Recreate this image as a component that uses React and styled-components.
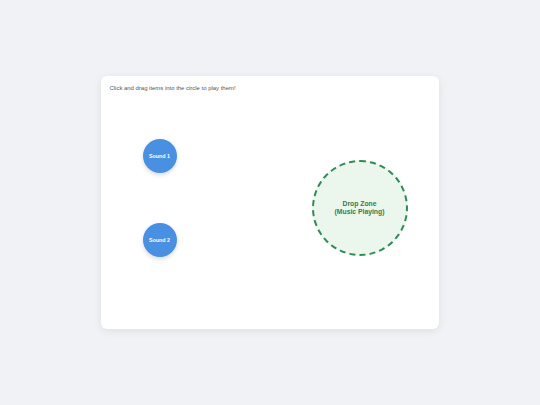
import React from 'react'
import styled, { createGlobalStyle } from 'styled-components'

const GlobalStyle = createGlobalStyle`
  html, body {
    margin: 0;
    padding: 0;
    background: #f0f2f5;
    font-family: "Liberation Sans", Arial, sans-serif;
  }
`;

const Page = styled.div`
  display: flex;
  align-items: center;
  justify-content: center;
  width: 540px;
  height: 405px;
`;

const Card = styled.div`
  position: relative;
  box-sizing: border-box;
  width: 338px;
  height: 253px;
  margin-left: -1px;
  padding: 8px 9px;
  background: #ffffff;
  border-radius: 6px;
  box-shadow: 0 2px 8px rgba(0, 0, 0, 0.08);
`;

const Instructions = styled.p`
  margin: 0;
  font-size: 5.95px;
  line-height: 8px;
  color: #555;
`;

const SoundItem = styled.div`
  position: absolute;
  left: ${(p) => p.x}px;
  top: ${(p) => p.y}px;
  width: 34px;
  height: 34px;
  border-radius: 50%;
  background: #4a90e2;
  box-shadow: 0 2px 4px rgba(0, 0, 0, 0.15);
  display: flex;
  align-items: center;
  justify-content: center;
  color: #fff;
  font-size: 5.3px;
  font-weight: bold;
  cursor: grab;
  user-select: none;
`;

const DropZone = styled.div`
  position: absolute;
  left: 211px;
  top: 84px;
  box-sizing: border-box;
  width: 96px;
  height: 96px;
  border-radius: 50%;
  border: 2px dashed #2e8b57;
  background: #ebf7ec;
  display: flex;
  align-items: center;
  justify-content: center;
  text-align: center;
  color: #2e7d4f;
  font-size: 6.8px;
  line-height: 8px;
  font-weight: bold;
`;

const sounds = [
  { id: 1, label: 'Sound 1', x: 42, y: 63 },
  { id: 2, label: 'Sound 2', x: 42, y: 147 },
]

export default function App() {
  return (
    <Page>
      <GlobalStyle />
      <Card>
        <Instructions>Click and drag items into the circle to play them!</Instructions>
        {sounds.map((s) => (
          <SoundItem key={s.id} x={s.x} y={s.y}>{s.label}</SoundItem>
        ))}
        <DropZone>
          <div>Drop Zone<br />(Music Playing)</div>
        </DropZone>
      </Card>
    </Page>
  )
}
